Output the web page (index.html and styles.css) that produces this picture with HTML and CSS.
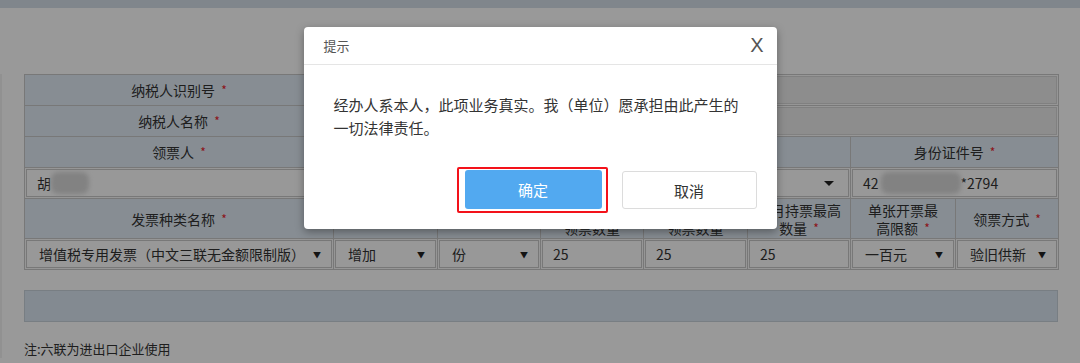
FILE: index.html
```html
<!DOCTYPE html>
<html lang="zh-CN">
<head>
  <meta charset="UTF-8">
  <title>领用发票</title>
  <link rel="stylesheet" href="styles.css">
</head>
<body>
  <div class="top-bar"></div>
  <div class="page">
    <table class="form-table">
      <colgroup>
        <col style="width:309px"><col style="width:104px"><col style="width:103px"><col style="width:103px">
        <col style="width:104px"><col style="width:103px"><col style="width:105px"><col style="width:103px">
      </colgroup>
      <tr class="row">
        <th>纳税人识别号 <span class="req">*</span></th>
        <td colspan="7"><div class="field disabled"></div></td>
      </tr>
      <tr class="row">
        <th>纳税人名称 <span class="req">*</span></th>
        <td colspan="7"><div class="field disabled"></div></td>
      </tr>
      <tr class="row">
        <th>领票人 <span class="req">*</span></th>
        <th colspan="2">联系电话 <span class="req">*</span></th>
        <th colspan="3">证件类型 <span class="req">*</span></th>
        <th colspan="2">身份证件号 <span class="req">*</span></th>
      </tr>
      <tr class="row">
        <td><div class="field">胡<span class="blur"></span></div></td>
        <td colspan="2"><div class="field"></div></td>
        <td colspan="3"><div class="field select">居民身份证<span class="arrow down"></span></div></td>
        <td colspan="2"><div class="field">42<span class="blur wide"></span>*2794</div></td>
      </tr>
      <tr class="row tall">
        <th>发票种类名称 <span class="req">*</span></th>
        <th>操作类型</th>
        <th>单位</th>
        <th>本次申请<br>领票数量</th>
        <th>每月最高<br>领票数量</th>
        <th>每月持票最高<br>数量 <span class="req">*</span></th>
        <th>单张开票最<br>高限额 <span class="req">*</span></th>
        <th>领票方式 <span class="req">*</span></th>
      </tr>
      <tr class="row">
        <td><div class="field select">增值税专用发票（中文三联无金额限制版）<span class="arrow">▼</span></div></td>
        <td><div class="field select">增加<span class="arrow">▼</span></div></td>
        <td><div class="field select">份<span class="arrow">▼</span></div></td>
        <td><div class="field num">25</div></td>
        <td><div class="field num">25</div></td>
        <td><div class="field num">25</div></td>
        <td><div class="field select">一百元<span class="arrow">▼</span></div></td>
        <td><div class="field select">验旧供新<span class="arrow">▼</span></div></td>
      </tr>
    </table>

    <div class="blue-bar"></div>
    <p class="note">注:六联为进出口企业使用</p>
  </div>

  <div class="mask">
    <div class="dialog">
      <div class="dialog-head">
        <span class="dialog-title">提示</span>
        <span class="dialog-close">X</span>
      </div>
      <div class="dialog-body">经办人系本人，此项业务真实。我（单位）愿承担由此产生的一切法律责任。</div>
      <div class="dialog-foot">
        <span class="mark"><button class="btn btn-ok">确定</button></span>
        <button class="btn btn-cancel">取消</button>
      </div>
    </div>
  </div>
</body>
</html>
```

FILE: styles.css
```css
body {
  margin: 0;
  font-family: "Microsoft YaHei", "Noto Sans CJK SC", "Liberation Sans", sans-serif;
  font-size: 14px;
  color: #333;
  background: #fff;
  height: 363px;
  overflow: hidden;
}

.top-bar {
  height: 8px;
  background: #d6e0ea;
}

.page {
  padding: 0 22px 0 24px;
  border-left: 2px solid #f2f2f2;
}

.form-table {
  margin-top: 66px;
  border-collapse: collapse;
  table-layout: fixed;
  width: 1034px;
  margin-left: -2px;
}

.form-table th,
.form-table td {
  border: 1px solid #c9c9c9;
  padding: 0;
}

.row {
  height: 31px;
}

.row.tall {
  height: 40px;
}

.form-table th {
  background: #e1ecf6;
  font-weight: normal;
  text-align: center;
  line-height: 18px;
}

.form-table td {
  background: #fafafa;
  padding: 1px;
}

.req {
  color: #e8242c;
  font-size: 12px;
  vertical-align: top;
  margin-left: 3px;
}

.field {
  box-sizing: border-box;
  height: 28px;
  border: 1px solid #c9c9c9;
  background: #fdfdfd;
  padding: 0 10px;
  white-space: nowrap;
  overflow: hidden;
  display: flex;
  align-items: center;
}

.field.disabled {
  background: #ebebeb;
  border-color: #d5d5d5;
}

.field.select {
  padding-left: 12px;
}

.arrow {
  margin-left: auto;
  font-size: 8px;
  color: #222;
  padding-left: 4px;
}

.arrow.down {
  width: 0;
  height: 0;
  padding: 0;
  border-left: 5px solid transparent;
  border-right: 5px solid transparent;
  border-top: 5px solid #222;
  margin-right: 4px;
  font-size: 0;
}

.blur {
  display: inline-block;
  width: 38px;
  height: 22px;
  background: #d9d9d9;
  border-radius: 8px;
  filter: blur(2px);
}

.blur.wide {
  width: 80px;
  margin-left: 2px;
}

.blue-bar {
  margin-top: 20px;
  margin-left: -2px;
  width: 1032px;
  height: 30px;
  background: #dbe7f2;
  border: 1px solid #c9d2da;
}

.note {
  margin: 17px 0 0 -2px;
  font-size: 13px;
  color: #333;
}

/* 遮罩层 */
.mask {
  position: absolute;
  left: 0;
  top: 0;
  width: 1080px;
  height: 363px;
  background: rgba(0, 0, 0, 0.4);
  display: flex;
  justify-content: center;
  align-items: flex-start;
  padding-top: 27px;
  box-sizing: border-box;
}

.dialog {
  width: 473px;
  background: #fff;
  border-radius: 4px;
  box-shadow: 0 3px 9px rgba(0, 0, 0, 0.35);
}

.dialog-head {
  height: 37px;
  border-bottom: 1px solid #e5e5e5;
  padding: 0 13px 0 20px;
  display: flex;
  align-items: center;
  justify-content: space-between;
}

.dialog-title {
  font-size: 13px;
  color: #555;
}

.dialog-close {
  font-family: "Liberation Sans", sans-serif;
  font-size: 20px;
  color: #555;
}

.dialog-body {
  padding: 28px 30px 0;
  font-size: 15px;
  line-height: 23px;
  color: #333;
}

.dialog-foot {
  margin-top: 28px;
  padding: 0 20px 16px;
  display: flex;
  justify-content: flex-end;
  align-items: center;
  gap: 14px;
}

.mark {
  border: 2px solid #f3121a;
  border-radius: 2px;
  padding: 1px 4px 2px 6px;
  display: flex;
}

.btn {
  font-family: inherit;
  font-size: 15px;
  height: 39px;
  border-radius: 3px;
  cursor: pointer;
}

.btn-ok {
  width: 137px;
  background: #52a9f0;
  border: none;
  color: #fff;
}

.btn-cancel {
  width: 135px;
  height: 38px;
  background: #fff;
  border: 1px solid #dcdcdc;
  color: #333;
}
```
